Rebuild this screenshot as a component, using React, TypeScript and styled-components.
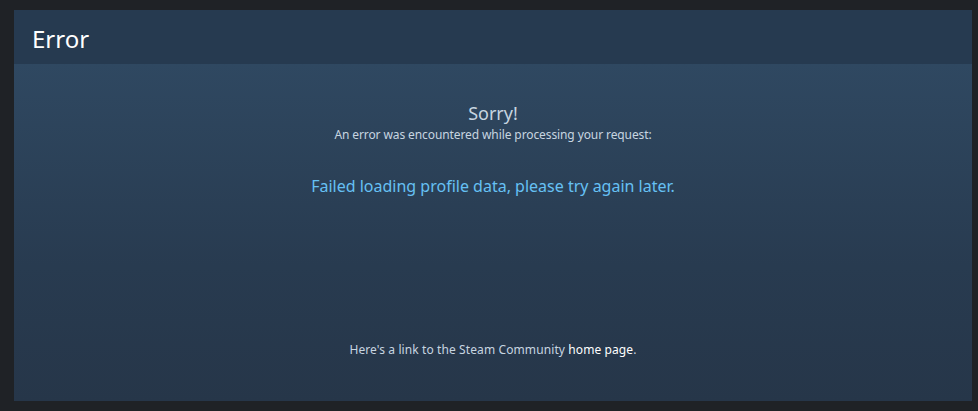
import React from "react";
import styled, { createGlobalStyle } from "styled-components";

const Global = createGlobalStyle`
  html, body { margin: 0; padding: 0; background: #1f2226; }
  body { font-family: "Noto Sans", "Open Sans", Arial, sans-serif; }
`;

const Page = styled.div`
  width: 978px;
  height: 411px;
  box-sizing: border-box;
  padding: 10px 6px 10px 14px;
  background: #1f2226;
  display: flex;
`;

const Panel = styled.div`
  flex: 1;
  display: flex;
  flex-direction: column;
`;

const Header = styled.div`
  height: 54px;
  box-sizing: border-box;
  padding: 3px 18px 0;
  display: flex;
  align-items: center;
  background: #263a50;
`;

const Title = styled.h1`
  margin: 0;
  font-size: 24px;
  font-weight: 400;
  color: #ffffff;
`;

const Body = styled.div`
  flex: 1;
  display: flex;
  flex-direction: column;
  align-items: center;
  background: linear-gradient(to bottom, #2f4861 0%, #283b50 60%, #263649 100%);
  padding-top: 37px;
`;

const Sorry = styled.div`
  font-size: 18px;
  color: #c7d5e0;
  line-height: 24px;
`;

const Sub = styled.div`
  font-size: 12px;
  letter-spacing: -0.1px;
  color: #c7d5e0;
  line-height: 16px;
  margin-top: 2px;
`;

const Message = styled.div`
  font-size: 16px;
  color: #66c0f4;
  line-height: 22px;
  margin-top: 32px;
`;

const Footer = styled.div`
  margin-top: auto;
  margin-bottom: 43px;
  font-size: 12px;
  letter-spacing: 0.1px;
  color: #c7d5e0;
  line-height: 16px;
`;

const Link = styled.a`
  color: #ffffff;
  text-decoration: none;
`;

export default function App() {
  return (
    <>
      <Global />
      <Page>
        <Panel>
          <Header>
            <Title>Error</Title>
          </Header>
          <Body>
            <Sorry>Sorry!</Sorry>
            <Sub>An error was encountered while processing your request:</Sub>
            <Message>Failed loading profile data, please try again later.</Message>
            <Footer>
              Here's a link to the Steam Community <Link href="#">home page</Link>.
            </Footer>
          </Body>
        </Panel>
      </Page>
    </>
  );
}
